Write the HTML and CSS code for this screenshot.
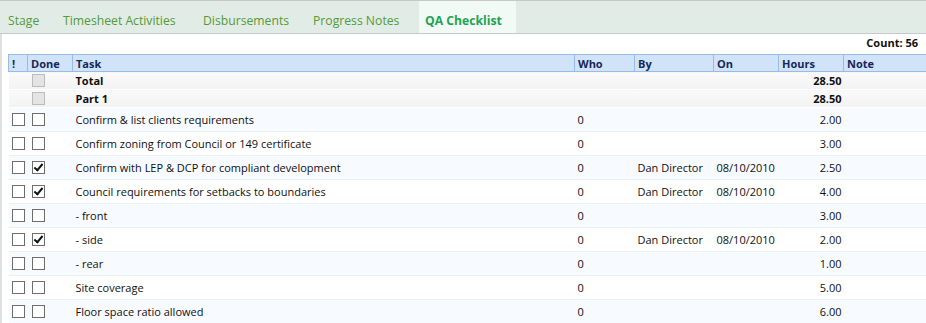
FILE: index.html
```html
<!DOCTYPE html>
<html lang="en">
<head>
  <meta charset="UTF-8">
  <title>QA Checklist</title>
  <link rel="stylesheet" href="styles.css">
</head>
<body>
  <div class="tabs">
    <div class="tab t-stage">Stage</div>
    <div class="tab t-time">Timesheet Activities</div>
    <div class="tab t-disb">Disbursements</div>
    <div class="tab t-prog">Progress Notes</div>
    <div class="tab active">QA Checklist</div>
  </div>
  <div class="panel">
    <div class="count">Count: 56</div>
    <table class="grid">
      <thead>
        <tr>
          <th class="c-flag">!</th>
          <th class="c-done">Done</th>
          <th class="c-task">Task</th>
          <th class="c-who">Who</th>
          <th class="c-by">By</th>
          <th class="c-on">On</th>
          <th class="c-hours">Hours</th>
          <th class="c-note">Note</th>
        </tr>
      </thead>
      <tbody>
        <tr class="group">
          <td></td><td><span class="cb off"></span></td><td>Total</td><td></td><td></td><td></td><td class="num">28.50</td><td></td>
        </tr>
        <tr class="group">
          <td></td><td><span class="cb off"></span></td><td>Part 1</td><td></td><td></td><td></td><td class="num">28.50</td><td></td>
        </tr>
        <tr class="alt">
          <td><span class="cb"></span></td><td><span class="cb"></span></td><td>Confirm &amp; list clients requirements</td><td>0</td><td></td><td></td><td class="num">2.00</td><td></td>
        </tr>
        <tr>
          <td><span class="cb"></span></td><td><span class="cb"></span></td><td>Confirm zoning from Council or 149 certificate</td><td>0</td><td></td><td></td><td class="num">3.00</td><td></td>
        </tr>
        <tr class="alt">
          <td><span class="cb"></span></td><td><span class="cb on"></span></td><td>Confirm with LEP &amp; DCP for compliant development</td><td>0</td><td>Dan Director</td><td>08/10/2010</td><td class="num">2.50</td><td></td>
        </tr>
        <tr>
          <td><span class="cb"></span></td><td><span class="cb on"></span></td><td>Council requirements for setbacks to boundaries</td><td>0</td><td>Dan Director</td><td>08/10/2010</td><td class="num">4.00</td><td></td>
        </tr>
        <tr class="alt">
          <td><span class="cb"></span></td><td><span class="cb"></span></td><td>- front</td><td>0</td><td></td><td></td><td class="num">3.00</td><td></td>
        </tr>
        <tr>
          <td><span class="cb"></span></td><td><span class="cb on"></span></td><td>- side</td><td>0</td><td>Dan Director</td><td>08/10/2010</td><td class="num">2.00</td><td></td>
        </tr>
        <tr class="alt">
          <td><span class="cb"></span></td><td><span class="cb"></span></td><td>- rear</td><td>0</td><td></td><td></td><td class="num">1.00</td><td></td>
        </tr>
        <tr>
          <td><span class="cb"></span></td><td><span class="cb"></span></td><td>Site coverage</td><td>0</td><td></td><td></td><td class="num">5.00</td><td></td>
        </tr>
        <tr class="alt">
          <td><span class="cb"></span></td><td><span class="cb"></span></td><td>Floor space ratio allowed</td><td>0</td><td></td><td></td><td class="num">6.00</td><td></td>
        </tr>
      </tbody>
    </table>
  </div>
</body>
</html>
```

FILE: styles.css
```css
body {
  margin: 0;
  font-family: "Open Sans", "Noto Sans", sans-serif;
  color: #111;
  background: #fff;
  overflow: hidden;
}
.tabs {
  display: flex;
  height: 32px;
  background: #e2ece6;
  border-top: 1px solid #c8c8c8;
  border-bottom: 1px solid #c8c8c8;
}
.tab {
  box-sizing: border-box;
  padding: 7px 0 0 0;
  line-height: 25px;
  font-size: 12.2px;
  color: #559a38;
}
.t-stage { padding-left: 8px; width: 63px; }
.t-time { width: 140px; }
.t-disb { width: 110px; }
.t-prog { width: 106px; }
.active {
  background: #f2faf5;
  color: #1ea352;
  font-weight: bold;
  padding-left: 6px;
  width: 97px;
}
.panel {
  border-left: 2px solid #e0e0e0;
  padding: 2px 0 0 6px;
}
.count {
  text-align: right;
  font-size: 11px;
  font-weight: bold;
  padding-right: 8px;
  height: 14px;
  line-height: 14px;
  padding-bottom: 4px;
}
.grid {
  border-collapse: collapse;
  width: 918px;
  table-layout: fixed;
  font-size: 11px;
}
.grid th {
  background: #d1e3f8;
  color: #15285a;
  text-align: left;
  font-weight: bold;
  height: 16px;
  padding: 0 3px;
  border-top: 1px solid #99bbe8;
  border-bottom: 1px solid #99bbe8;
  border-left: 1px solid #99bbe8;
}
.c-flag { width: 12px; }
.c-done { width: 38px; }
.c-task { width: auto; }
.c-who { width: 53px; }
.c-by { width: 72px; }
.c-on { width: 58px; }
.c-hours { width: 58px; }
.c-note { width: 76px; }
.grid td {
  height: 23px;
  padding: 0 3px;
  border-bottom: 1px solid #ebf0f7;
  white-space: nowrap;
  overflow: hidden;
}
.grid td:nth-child(2) {
  padding-left: 4px;
}
.grid tr.alt td {
  background: #f7faff;
}
.grid tr.group td {
  height: 17px;
  font-weight: bold;
  background: linear-gradient(#fafafa, #f2f2f2);
  border-bottom: 1px solid #fff;
}
.grid td.num {
  text-align: right;
  padding-right: 2px;
}
.cb {
  display: block;
  width: 11px;
  height: 11px;
  border: 1px solid #6e6e6e;
  background: #fff;
  position: relative;
}
.cb.off {
  border-color: #bcbcbc;
  background: #e4e4e4;
}
.cb.on::after {
  content: "";
  position: absolute;
  left: 3px;
  top: 0px;
  width: 3px;
  height: 7px;
  border: solid #111;
  border-width: 0 2px 2px 0;
  transform: rotate(40deg);
}
```
